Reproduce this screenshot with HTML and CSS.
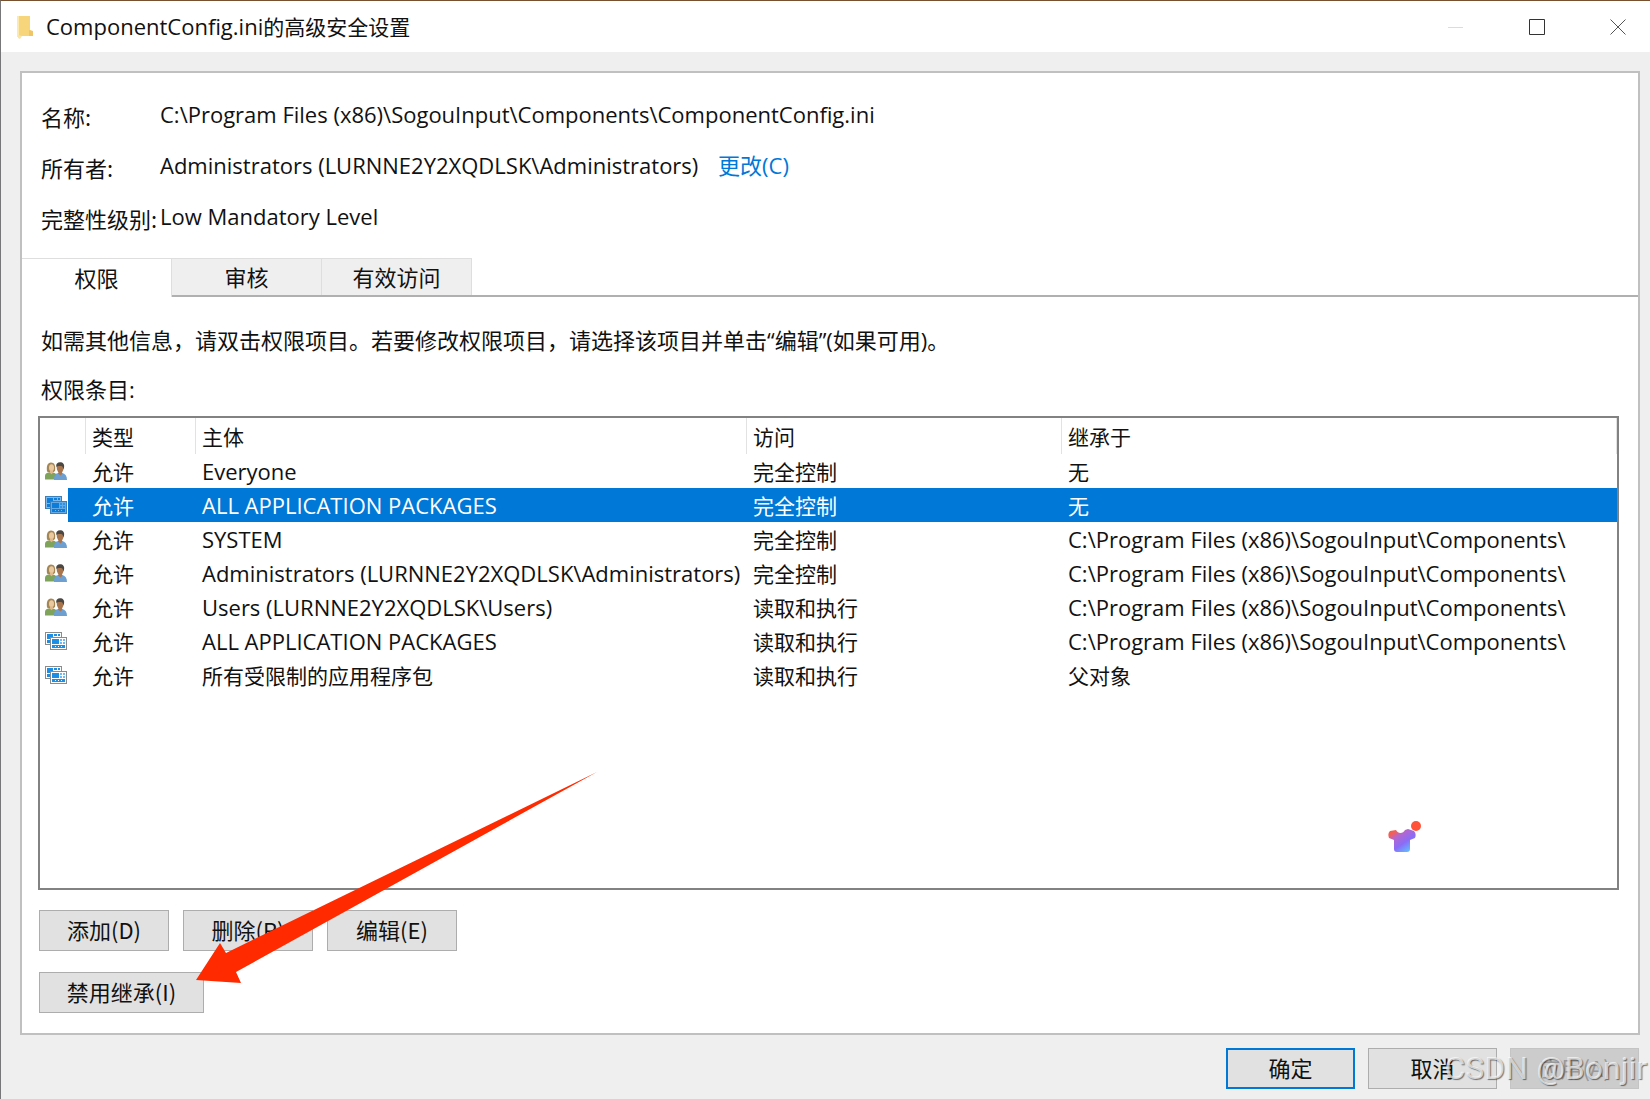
FILE: index.html
```
<!DOCTYPE html>
<html lang="zh-CN">
<head>
    <meta charset="UTF-8">
    <meta name="viewport" content="width=device-width, initial-scale=1.0">
    <title>ComponentConfig.ini的高级安全设置</title>
    <link rel="stylesheet" href="styles.css">
</head>
<body>

<!-- 图标 -->
<svg class="sprite" width="0" height="0" aria-hidden="true">
    <symbol id="icon-users" viewBox="0 0 22 18">
        <path d="M0 17.500V14c0-2.200 1.600-3.300 4-3.500h4c2.200.3 3.500 1.500 3.500 3.500v3.500z" fill="#7fa35a"/>
        <path d="M2 9.500C1.200 4 2.500.5 6 .5s4.800 3 4 8.500l-2.200 1.500H4z" fill="#a58655"/>
        <ellipse cx="6.500" cy="5.800" rx="2.500" ry="3.500" fill="#eac9a0"/>
        <path d="M5 8.500h3v2.300l-1.500 1.400L5 10.800z" fill="#e0b88d"/>
        <path d="M9 18c-.3-4.500 1.500-6.700 4.500-7h3.500c3.300.5 5 3 5 7z" fill="#6d9fd1"/>
        <path d="M13.500 10h3.500l.5 1.500-2 2-2.500-2z" fill="#a8754d"/>
        <ellipse cx="15.200" cy="5.800" rx="3.500" ry="4.800" fill="#a8754d"/>
        <path d="M11.200 5C10.800 1.800 12.500.3 15 .3c3 0 4.800 1.900 4 5.500l-.8 1.400c-.2-2.200-.8-3.200-2.200-3.300-2 0-3.600-.2-4.800 1.100z" fill="#4b4743"/>
    </symbol>
    <symbol id="icon-package" viewBox="0 0 22 18">
        <rect x=".5" y=".5" width="16" height="12" fill="#fff" stroke="#8b8b8b"/>
        <path d="M2 2h6v5H2zM2 8h3v3H2zM9 2h3v2H9zM13 2h2v2h-2z" fill="#1c8ee6"/>
        <rect x="5.500" y="5.500" width="16" height="12" fill="#fff" stroke="#8b8b8b"/>
        <path d="M7 7h7v5H7zM7 13h13v3H7z" fill="#1c8ee6"/>
        <path d="M15 7h2v2h-2zM18 7h2v2h-2zM15 10h2v2h-2zM18 10h2v2h-2z" fill="#6fbaf2"/>
        <path d="M10 14h1v1h-1zM13 14h1v1h-1zM16 14h1v1h-1z" fill="#fff"/>
    </symbol>
    <symbol id="icon-package-selected" viewBox="0 0 22 18">
        <rect x=".5" y=".5" width="16" height="12" fill="#7db8ea" stroke="#3d80b8"/>
        <path d="M2 2h6v5H2zM2 8h3v3H2zM9 2h3v2H9zM13 2h2v2h-2z" fill="#0d7fdb"/>
        <rect x="5.500" y="5.500" width="16" height="12" fill="#65aae5" stroke="#3d80b8"/>
        <path d="M7 7h7v5H7zM7 13h13v3H7z" fill="#0b7cda"/>
        <path d="M15 7h2v2h-2zM18 7h2v2h-2zM15 10h2v2h-2zM18 10h2v2h-2z" fill="#2f91e2"/>
        <path d="M10 14h1v1h-1zM13 14h1v1h-1zM16 14h1v1h-1z" fill="#7db8ea"/>
    </symbol>
</svg>

<div class="window">
    <header class="titlebar">
        <svg class="folder" viewBox="0 0 16 24" aria-hidden="true">
            <path d="M0 1h3v21H0z" fill="#fbe9ad"/>
            <path d="M2 1h11v14l2 1v5H3l-1 3z" fill="#f7d57a"/>
            <path d="M12 15l4 1v5h-4z" fill="#efc568"/>
            <path d="M1 20l4 1-2 3-2-1z" fill="#fae5a4"/>
        </svg>
        <h1><span class="latin">ComponentConfig.ini</span>的高级安全设置</h1>
        <div class="window-buttons">
            <button type="button" aria-label="最小化" disabled>
                <svg viewBox="0 0 16 16"><path d="M0 8.500h15" stroke="#dcdcdc" fill="none"/></svg>
            </button>
            <button type="button" aria-label="最大化">
                <svg viewBox="0 0 16 16"><path d="M.5.5h15v15H.5z" stroke="#333" fill="none"/></svg>
            </button>
            <button type="button" aria-label="关闭">
                <svg viewBox="0 0 16 16"><path d="M.5.5l15 15m0-15l-15 15" stroke="#555" fill="none"/></svg>
            </button>
        </div>
    </header>

    <main class="panel">
        <dl class="info">
            <div class="info-row">
                <dt>名称:</dt>
                <dd>C:\Program Files (x86)\SogouInput\Components\ComponentConfig.ini</dd>
            </div>
            <div class="info-row">
                <dt>所有者:</dt>
                <dd>Administrators (LURNNE2Y2XQDLSK\Administrators) <a href="#">更改(C)</a></dd>
            </div>
            <div class="info-row">
                <dt>完整性级别:</dt>
                <dd>Low Mandatory Level</dd>
            </div>
        </dl>

        <div class="tabs" role="tablist">
            <button type="button" class="tab active" role="tab" aria-selected="true">权限</button>
            <button type="button" class="tab" role="tab" aria-selected="false">审核</button>
            <button type="button" class="tab" role="tab" aria-selected="false">有效访问</button>
        </div>

        <section class="tab-content">
            <p>如需其他信息，请双击权限项目。若要修改权限项目，请选择该项目并单击“编辑”(如果可用)。</p>
            <p id="listLabel">权限条目:</p>

            <div class="list">
                <table aria-labelledby="listLabel">
                    <colgroup>
                        <col class="col-icon">
                        <col class="col-type">
                        <col class="col-principal">
                        <col class="col-access">
                        <col>
                    </colgroup>
                    <thead>
                        <tr><th></th><th>类型</th><th>主体</th><th>访问</th><th>继承于</th></tr>
                    </thead>
                    <tbody>
                        <tr>
                            <td><svg class="icon"><use href="#icon-users"/></svg></td>
                            <td>允许</td><td class="latin">Everyone</td><td>完全控制</td><td>无</td>
                        </tr>
                        <tr class="selected">
                            <td><svg class="icon"><use href="#icon-package-selected"/></svg></td>
                            <td>允许</td><td class="latin">ALL APPLICATION PACKAGES</td><td>完全控制</td><td>无</td>
                        </tr>
                        <tr>
                            <td><svg class="icon"><use href="#icon-users"/></svg></td>
                            <td>允许</td><td class="latin">SYSTEM</td><td>完全控制</td><td class="latin">C:\Program Files (x86)\SogouInput\Components\</td>
                        </tr>
                        <tr>
                            <td><svg class="icon"><use href="#icon-users"/></svg></td>
                            <td>允许</td><td class="latin">Administrators (LURNNE2Y2XQDLSK\Administrators)</td><td>完全控制</td><td class="latin">C:\Program Files (x86)\SogouInput\Components\</td>
                        </tr>
                        <tr>
                            <td><svg class="icon"><use href="#icon-users"/></svg></td>
                            <td>允许</td><td class="latin">Users (LURNNE2Y2XQDLSK\Users)</td><td>读取和执行</td><td class="latin">C:\Program Files (x86)\SogouInput\Components\</td>
                        </tr>
                        <tr>
                            <td><svg class="icon"><use href="#icon-package"/></svg></td>
                            <td>允许</td><td class="latin">ALL APPLICATION PACKAGES</td><td>读取和执行</td><td class="latin">C:\Program Files (x86)\SogouInput\Components\</td>
                        </tr>
                        <tr>
                            <td><svg class="icon"><use href="#icon-package"/></svg></td>
                            <td>允许</td><td>所有受限制的应用程序包</td><td>读取和执行</td><td>父对象</td>
                        </tr>
                    </tbody>
                </table>
            </div>

            <div class="actions">
                <button type="button" class="btn">添加(D)</button>
                <button type="button" class="btn">删除(R)</button>
                <button type="button" class="btn">编辑(E)</button>
            </div>
            <div class="actions">
                <button type="button" class="btn btn-wide">禁用继承(I)</button>
            </div>
        </section>
    </main>

    <footer class="footer">
        <button type="button" class="btn btn-default">确定</button>
        <button type="button" class="btn">取消</button>
        <button type="button" class="btn" disabled>应用(A)</button>
    </footer>

    <!-- 浮动在窗口上方的内容 -->
    <svg class="arrow" viewBox="0 0 402 212" aria-hidden="true">
        <path d="M0 208L24 171 30 181 401 0 40 200 45 211z" fill="#ff2a00"/>
    </svg>
    <svg class="shirt" viewBox="0 0 34 34" aria-hidden="true">
        <defs>
            <linearGradient id="shirtFill" x1="0" y1="0" x2=".8" y2="1">
                <stop offset="0" stop-color="#ff5a3c"/>
                <stop offset=".2" stop-color="#f0605c"/>
                <stop offset=".35" stop-color="#b566cc"/>
                <stop offset=".65" stop-color="#8a6cf8"/>
                <stop offset="1" stop-color="#5cc8ff"/>
            </linearGradient>
        </defs>
        <path d="M8 10c2 4 7 4 9 0l3-1 6 2c2 2 2 5 1 7l-5 2v9c0 2-1 3-3 3H9c-2 0-3-1-3-3v-9l-5-2c-1-3-1-5 1-7z" fill="url(#shirtFill)"/>
        <circle cx="28" cy="6" r="5" fill="#ff5238"/>
    </svg>
    <span class="watermark">CSDN @Bonjir</span>
</div>

</body>
</html>
```
FILE: styles.css
```
* {
    box-sizing: border-box;
}
body {
    margin: 0;
    font-family: "Noto Sans CJK SC", sans-serif;
    font-size: 22px;
    line-height: 32px;
    color: #111;
    background-color: #efefef;
}
h1, p, dl, dd {
    margin: 0;
}
button {
    font: inherit;
    color: inherit;
    padding: 0;
    border: none;
    background: none;
}
.sprite {
    position: absolute;
}
.window {
    position: relative;
    display: flex;
    flex-direction: column;
    min-height: 100vh;
    border-top: 1px solid #76502f;
    border-left: 1px solid #77777a;
    overflow: hidden;
}

/* 标题栏 */
.titlebar {
    display: flex;
    align-items: center;
    height: 51px;
    padding-left: 16px;
    background-color: #fff;
}
.titlebar h1 {
    flex: 1;
    margin-left: 13px;
    padding-bottom: 2px;
    font-size: 21px;
    font-weight: 400;
}
.folder {
    width: 16px;
    height: 24px;
}
.window-buttons {
    display: flex;
    gap: 17px;
}
.window-buttons button {
    width: 64px;
    height: 51px;
}
.window-buttons svg {
    display: block;
    width: 16px;
    height: 16px;
    margin: 0 auto;
}

/* 主面板 */
.panel {
    flex: 1;
    display: flex;
    flex-direction: column;
    margin: 19px 10px 0 19px;
    border: 2px solid #c0c0c0;
    background-color: #fff;
}
.info {
    display: flex;
    flex-direction: column;
    gap: 17px;
    padding: 25px 18px 24px 19px;
}
.info-row {
    display: flex;
}
.info dt {
    width: 119px;
    padding-top: 2px;
    white-space: nowrap;
}
.info dd, .tab-content p, .latin {
    font-family: "Open Sans", "Noto Sans CJK SC", sans-serif;
}
.latin {
    font-size: 22px;
}
.info a {
    margin-left: 14px;
    color: #0078d7;
    text-decoration: none;
}
.tabs {
    display: flex;
    height: 39px;
    border-bottom: 2px solid #b0b0b0;
}
.tab {
    width: 150px;
    padding-bottom: 2px;
    background-color: #efefef;
    border: 1px solid #dedede;
    border-bottom: none;
    border-left: none;
}
.tab.active {
    height: 39px;
    background-color: #fff;
}
.tab-content {
    flex: 1;
    display: flex;
    flex-direction: column;
    padding: 27px 19px 20px 16px;
}
.tab-content p {
    margin: 0 0 17px 3px;
}
.tab-content #listLabel {
    margin-bottom: 11px;
}

/* 权限条目列表 */
.list {
    flex: 1;
    border: 2px solid #828282;
    margin-bottom: 20px;
}
table {
    width: 100%;
    table-layout: fixed;
    border-collapse: collapse;
    font-size: 21px;
}
.col-icon {
    width: 46px;
}
.col-type {
    width: 110px;
}
.col-principal {
    width: 551px;
}
.col-access {
    width: 315px;
}
th, td {
    height: 34px;
    padding: 0 0 0 6px;
    line-height: 34px;
    font-weight: 400;
    text-align: left;
    white-space: nowrap;
}
td:first-child {
    padding-left: 5px;
}
th {
    height: 36px;
    box-shadow: inset -1px 0 #e2e2e2;
}
.icon {
    display: block;
    width: 22px;
    height: 18px;
}
.selected td {
    color: #fff;
    background-color: #0078d7;
}
.selected td:first-child {
    background: linear-gradient(to right, #fff 28px, #0078d7 28px);
}

/* 按钮 */
.actions {
    display: flex;
    gap: 14px;
    margin-left: 1px;
}
.actions + .actions {
    margin-top: 21px;
}
.btn {
    width: 130px;
    height: 41px;
    padding-bottom: 3px;
    background-color: #e1e1e1;
    border: 1px solid #adadad;
}
.btn-wide {
    width: 165px;
}
.btn-default {
    border: 2px solid #0078d7;
}
.btn:disabled {
    color: #999;
    background-color: #ccc;
    border-color: #c4c4c4;
}
.footer {
    display: flex;
    justify-content: flex-end;
    gap: 13px;
    padding: 13px 11px 10px;
}
.footer .btn {
    width: 129px;
}

.arrow {
    position: absolute;
    left: 195px;
    top: 771px;
    width: 402px;
    height: 212px;
}
.shirt {
    position: absolute;
    right: 228px;
    top: 819px;
    width: 34px;
    height: 34px;
}
.watermark {
    position: absolute;
    right: 3px;
    bottom: 15px;
    font-family: Roboto, sans-serif;
    font-size: 32px;
    color: rgba(255, 255, 255, 0.7);
    text-shadow: 1px 1px 1px rgba(0, 0, 0, 0.5);
}
```
